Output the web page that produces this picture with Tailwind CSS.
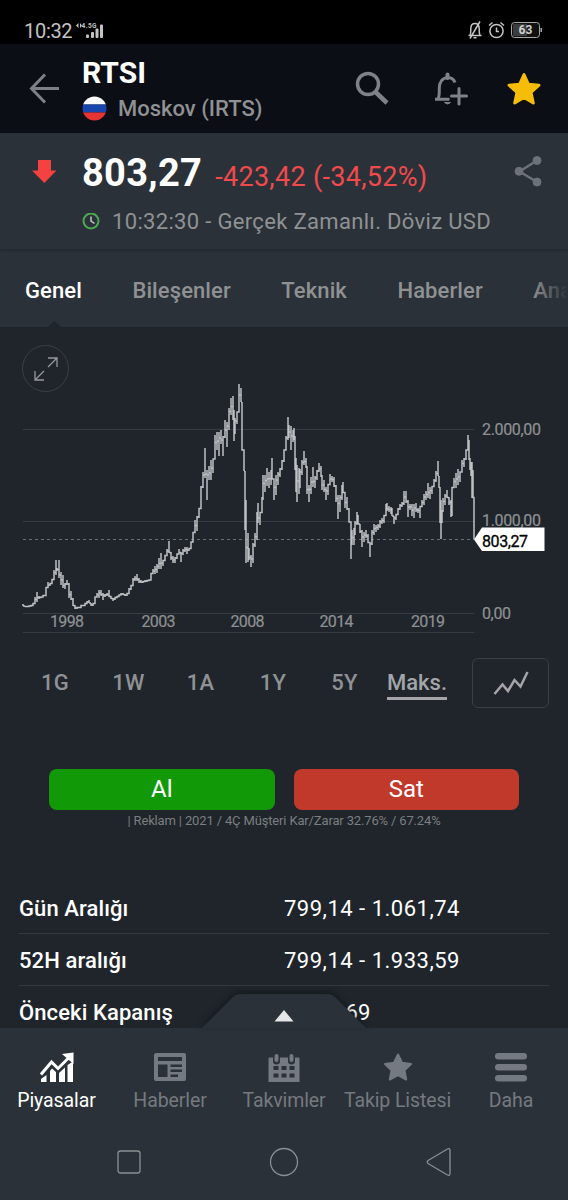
<!DOCTYPE html>
<html lang="tr">
<head>
  <meta charset="UTF-8">
  <meta name="viewport" content="width=device-width, initial-scale=1.0">
  <title>RTSI - Moskov (IRTS)</title>
  <script src="https://cdn.jsdelivr.net/npm/@tailwindcss/browser@4"></script>
</head>
<body class="bg-[#1f252b]">
  <div class="relative flex h-[1200px] w-[568px] flex-col overflow-hidden bg-[#1f252b] font-['Roboto',sans-serif] text-[#8f9193]">

    <!-- Status bar -->
    <div class="flex h-11 shrink-0 items-end justify-between bg-black pr-[25px] pb-[4px] pl-6 text-[#c4c4c4]">
      <div class="flex items-end">
        <span class="text-[20px] leading-[18px] tracking-[-0.3px]">10:32</span>
        <svg class="ml-1 h-[18px] w-[30px]" viewBox="0 0 30 18" fill="#c4c4c4">
          <path d="M2.500 1v5L0 3.500zM4 1v5l2-2.500z" />
          <text x="5.500" y="5.500" font-size="6.500" font-weight="700" textLength="15">4.5G</text>
          <rect x="10" y="12.500" width="3" height="3.500" rx="1" />
          <rect x="15" y="10" width="3" height="6" rx="1" />
          <rect x="19.500" y="6.500" width="3" height="9.500" rx="1" />
          <rect x="24" y="2.500" width="3" height="13.500" rx="1" />
        </svg>
      </div>
      <div class="flex items-center gap-[5px]">
        <svg class="h-5 w-4" viewBox="0 0 16 20" fill="none" stroke="#c4c4c4" stroke-width="1.500">
          <path d="M1.500 15.500h13M3 15.500c.8-1.500.8-4 .8-7C3.800 5 5.800 3.500 8 3.500s4.200 1.500 4.200 5c0 3 0 5.500.8 7M6.500 17.800h3M13 1.500L3 18.500" />
        </svg>
        <svg class="h-5 w-[17px]" viewBox="0 0 17 20" fill="none" stroke="#c4c4c4" stroke-width="1.500">
          <circle cx="8.500" cy="11" r="6.600" />
          <path d="M8.500 7.500V11.500H11M1 5.500L4.500 2.500M16 5.500L12.500 2.500" />
        </svg>
        <svg class="h-5 w-[33px]" viewBox="0 0 33 20">
          <rect x="1.500" y="2.500" width="28" height="15" rx="3" fill="#111" stroke="#a8a8a8" />
          <path d="M4 4h13v12H4q-1 0-1-1V5q0-1 1-1z" fill="#3c3c3c" />
          <rect x="30.500" y="8" width="1.500" height="4" fill="#a8a8a8" />
          <text x="15.500" y="14.200" text-anchor="middle" font-size="12" font-weight="700" fill="#d0d0d0">63</text>
        </svg>
      </div>
    </div>

    <!-- App header -->
    <header class="flex h-[89px] shrink-0 items-center bg-[#0b0e15]">
      <svg class="ml-[29px] h-8 w-8" viewBox="0 0 32 32" fill="none" stroke="#7d8087" stroke-width="3">
        <path d="M30 15.500H3M16 1.500L2.500 15.500L16 29.500" />
      </svg>
      <div class="ml-[21px] w-[260px]">
        <h1 class="pt-[3px] text-[30px] leading-[32px] font-bold text-white">RTSI</h1>
        <div class="mt-[4px] flex h-[30px] items-center">
          <svg class="h-[25px] w-[25px]" viewBox="0 0 25 25">
            <clipPath id="flag"><circle cx="12.500" cy="12.500" r="12" /></clipPath>
            <g clip-path="url(#flag)">
              <rect width="25" height="8.500" fill="#fafafa" />
              <rect y="8.500" width="25" height="8" fill="#1846ae" />
              <rect y="16.500" width="25" height="8.500" fill="#e63434" />
            </g>
          </svg>
          <span class="ml-[11px] pt-[2px] text-[22px] leading-[26px] font-medium">Moskov (IRTS)</span>
        </div>
      </div>
      <svg class="ml-[12px] h-9 w-9" viewBox="0 0 36 36" fill="none" stroke="#7f8289">
        <circle cx="14" cy="13" r="10.500" stroke-width="3.500" />
        <path d="M21.500 21L33 32" stroke-width="4.500" />
      </svg>
      <svg class="ml-[42px] h-9 w-9" viewBox="0 0 36 36" fill="none" stroke="#7f8289" stroke-width="3">
        <path d="M3 28.300H17.500M5.800 28C7.500 26 7.300 22.500 7.300 17.500C7.300 11 10.500 7 15.500 6.500C19.500 6.500 22 8.500 23 11.500" />
        <path d="M15.500 3.500V7" stroke-width="4" stroke-linecap="round" />
        <path d="M12.500 31.500Q15.500 34.500 18.500 31.500z" fill="#7f8289" stroke-width="1" />
        <path d="M27 17.500V33M19.500 25H34.500" stroke-linecap="round" />
      </svg>
      <svg class="ml-[38px] h-9 w-9" viewBox="0 0 36 36" fill="#f6bd08" stroke="#f6bd08" stroke-width="3" stroke-linejoin="round">
        <path d="M18 3.500L22.300 13.200L33 14.200L25 21.300L27.300 32L18 26.400L8.700 32L11 21.300L3 14.200L13.700 13.200z" />
      </svg>
    </header>

    <!-- Quote -->
    <section class="relative z-10 flex h-[116px] shrink-0 bg-[#2b3138] shadow-[0_1px_3px_rgba(0,0,0,0.25)]">
      <svg class="mt-[27px] ml-8 h-6 w-[25px]" viewBox="0 0 25 24" fill="#f44141">
        <path d="M6 0H19V10.500H24.500L12.300 23L0 10.500H6z" />
      </svg>
      <div class="ml-[25px] flex flex-col">
        <div class="flex h-[76px] items-baseline pt-[18px] whitespace-nowrap">
          <span class="text-[38px] leading-[44px] font-bold tracking-[0.3px] text-white">803,27</span>
          <span class="ml-[13px] text-[27px] leading-[44px] tracking-[0.3px] text-[#f04a4c]">-423,42 (-34,52%)</span>
        </div>
        <div class="flex items-center whitespace-nowrap">
          <svg class="h-[18px] w-[18px]" viewBox="0 0 18 18" fill="none">
            <circle cx="9" cy="8" r="7.500" stroke="#4da851" stroke-width="2" />
            <path d="M9 3.500V8L12.500 10.500" stroke="#c4c8c4" stroke-width="1.500" />
          </svg>
          <span class="ml-[12px] text-[22px] leading-[26px] tracking-[0.33px]">10:32:30 - Gerçek Zamanlı. Döviz USD</span>
        </div>
      </div>
      <svg class="absolute top-[22px] right-[26px] h-8 w-7" viewBox="0 0 28 32" fill="#6d7178" stroke="#6d7178">
        <path d="M23 5.500L5.500 16.500L23 27" stroke-width="2.500" fill="none" />
        <circle cx="23" cy="5.500" r="4" /><circle cx="5" cy="16.300" r="4" /><circle cx="23" cy="27" r="4" />
      </svg>
    </section>

    <!-- Tabs -->
    <nav class="relative flex h-[78px] shrink-0 items-center gap-[50.5px] overflow-hidden bg-[#2b3138] pt-[6px] pl-[25px] text-[22px] leading-[26px] font-medium tracking-[0.1px] whitespace-nowrap">
      <span class="text-white">Genel</span>
      <span>Bileşenler</span>
      <span>Teknik</span>
      <span>Haberler</span>
      <span>Analiz</span>
      <div class="absolute top-0 right-0 h-full w-9 bg-linear-to-r from-[#2b3138]/0 to-[#2b3138]"></div>
      <svg class="absolute bottom-0 left-12 h-[6px] w-[13px]" viewBox="0 0 13 6"><path d="M0 6L6.500 0L13 6z" fill="#1f252b" /></svg>
    </nav>

    <!-- Price chart -->
    <section class="relative h-[313px] shrink-0">
      <svg class="h-[313px] w-[568px]" viewBox="0 327 568 313" fill="none">
        <path d="M23 429.500H474M23 521.500H474M23 613.500H474M23 632.500H474" stroke="#373c42" />
        <path d="M23 539.500H474" stroke="#6a6f74" stroke-dasharray="3 3" />
        <path id="series" stroke="#bfc1c3" stroke-width="1.500" />
        <g font-size="16" fill="#8f9193" stroke="#8f9193" stroke-width=".2">
          <text x="50" y="627" textLength="34">1998</text>
          <text x="141.500" y="627" textLength="34">2003</text>
          <text x="230.500" y="627" textLength="34">2008</text>
          <text x="319.500" y="627" textLength="34">2014</text>
          <text x="411" y="627" textLength="34">2019</text>
          <text x="482" y="434.500" textLength="59">2.000,00</text>
          <text x="482" y="526" textLength="59">1.000,00</text>
          <text x="482" y="618.500" textLength="29">0,00</text>
        </g>
        <path d="M474 539.500L482 527.500H544.500V551H482z" fill="#fff" />
        <text x="482" y="546.500" font-size="16" fill="#000" stroke="#000" stroke-width=".3" textLength="46">803,27</text>
      </svg>
      <div class="absolute top-[18px] left-[22px] flex h-[47px] w-[47px] items-center justify-center rounded-full border border-[#3d3f47] bg-[#20242b]">
        <svg class="h-6 w-6" viewBox="0 0 24 24" fill="none" stroke="#96989b" stroke-width="1.300">
          <path d="M14 1H23V10M23 1L14 10M1 14V23H10M1 23L10 14" />
        </svg>
      </div>
    </section>

    <!-- Time ranges -->
    <section class="flex h-[86px] shrink-0 items-center text-[22px] leading-[26px] font-medium tracking-[0.3px]">
      <div class="grid w-[387px] shrink-0 grid-cols-[110px_37px_107px_38px_95px] pb-px text-center whitespace-nowrap">
        <span>1G</span>
        <span class="-mx-2">1W</span>
        <span>1A</span>
        <span class="-mx-2">1Y</span>
        <span class="pl-[10px]">5Y</span>
      </div>
      <span class="mt-[1px] mr-[25px] h-[33px] w-[60px] shrink-0 border-b-[3px] border-[#a3a5a8] pt-[3px] tracking-normal text-[#a3a5a8]">Maks.</span>
      <div class="flex h-[50px] w-[77px] shrink-0 items-center justify-center rounded-md border border-[#3a3f46]">
        <svg class="h-6 w-9" viewBox="0 0 36 24" fill="none" stroke="#a3a5a8" stroke-width="2.500">
          <path d="M1.500 23L9.500 13.500L15 20L21.500 9L27.500 15.500L34.500 1" />
        </svg>
      </div>
    </section>

    <!-- Trade buttons -->
    <section class="mt-[43px] shrink-0 px-[49px]">
      <div class="grid grid-cols-2 gap-[19px] text-center text-[24px] leading-[40px] text-white">
        <div class="h-[41px] rounded-lg bg-[#129908]">Al</div>
        <div class="h-[41px] rounded-lg bg-[#c1392b]">Sat</div>
      </div>
      <p class="mt-[3px] text-center text-[13px] leading-4 tracking-[-0.15px] whitespace-nowrap text-[#7c7e80]">| Reklam | 2021 / 4Ç Müşteri Kar/Zarar 32.76% / 67.24%</p>
    </section>

    <!-- Summary -->
    <dl class="mx-[19px] mt-[53px] shrink-0 text-[22px] leading-[26px] tracking-[0.5px] text-white">
      <div class="flex h-[52px] items-center border-b border-[#343940] pt-[2px]">
        <dt class="w-[265px] font-medium tracking-[0.1px]">Gün Aralığı</dt><dd>799,14 - 1.061,74</dd>
      </div>
      <div class="flex h-[52px] items-center border-b border-[#343940] pt-[2px]">
        <dt class="w-[265px] font-medium tracking-[0.1px]">52H aralığı</dt><dd>799,14 - 1.933,59</dd>
      </div>
      <div class="flex h-[52px] items-center pt-[2px]">
        <dt class="w-[265px] font-medium tracking-[0.1px]">Önceki Kapanış</dt><dd class="tracking-[0.3px]">1.226,69</dd>
      </div>
    </dl>

    <!-- Bottom bar -->
    <footer class="absolute inset-x-0 bottom-0 h-[207px]">
      <svg class="h-[35px] w-[568px] drop-shadow-[0_-2px_3px_rgba(0,0,0,0.35)]" viewBox="0 0 568 35">
        <path d="M0 35H202L233 4Q236 1 241 1H327Q332 1 335 4L366 35H568V36H0z" fill="#2b3138" />
        <path d="M284 17L293.500 28.500H274.500z" fill="#e4e6e8" />
      </svg>
      <div class="h-[172px] bg-[#2b3138]">
        <div class="grid h-[86px] grid-cols-[113px_114px_114px_113px_114px] pt-6 text-center text-[19.5px] leading-6 tracking-[-0.1px] whitespace-nowrap text-[#757980]">
          <div class="flex flex-col items-center gap-[7px] text-white">
            <svg class="h-[30px] w-[34px]" viewBox="0 0 34 30">
              <path d="M1 22.500L11.500 10L18 16.500L29 5.500" fill="none" stroke="#fff" stroke-width="3" />
              <path d="M22 2L33.500 .5V12z" fill="#fff" />
              <path d="M1 27L6.500 23V30H1zM10 19L12 16.500L16 20V30H10zM19 21L25 15.500V30H19zM27.500 13L33 9.500V30H27.500z" fill="#fff" />
            </svg>
            <span>Piyasalar</span>
          </div>
          <div class="flex flex-col items-center gap-[7px]">
            <svg class="h-[30px] w-8" viewBox="0 0 32 30">
              <path fill="#757980" fill-rule="evenodd" d="M2 1H30Q32 1 32 3V27Q32 29 30 29H2Q0 29 0 27V3Q0 1 2 1zM4 5V9H28V5zM4 12.500V25H13.500V12.500zM16.500 12.500V15H28V12.500zM16.500 17.500V20H28V17.500zM16.500 22.500V25H24V22.500z" />
            </svg>
            <span>Haberler</span>
          </div>
          <div class="flex flex-col items-center gap-[7px]">
            <svg class="h-[30px] w-8" viewBox="0 0 32 30">
              <rect x=".5" y="5.500" width="31" height="25" rx="1" fill="#757980" />
              <path d="M8.500 4V9M23.500 4V9" stroke="#2b3138" stroke-width="7" stroke-linecap="round" />
              <path d="M8.500 4V8M23.500 4V8" stroke="#757980" stroke-width="4" stroke-linecap="round" />
              <path d="M5.500 14h5v4h-5zM13.500 14h5v4h-5zM21.500 14h5v4h-5zM5.500 21.500h5v4h-5zM13.500 21.500h5v4h-5zM21.500 21.500h5v4h-5z" fill="#2b3138" />
            </svg>
            <span>Takvimler</span>
          </div>
          <div class="flex flex-col items-center gap-[7px]">
            <svg class="h-[30px] w-[30px]" viewBox="0 0 30 30" fill="#757980" stroke="#757980" stroke-width="2" stroke-linejoin="round">
              <path d="M15 2.500L19 10.800L28 12L21.500 18.300L23.200 27.500L15 23.200L6.800 27.500L8.500 18.300L2 12L11 10.800z" />
            </svg>
            <span>Takip Listesi</span>
          </div>
          <div class="flex flex-col items-center gap-[7px]">
            <svg class="h-[30px] w-8" viewBox="0 0 32 30" fill="#757980">
              <rect y="1" width="32" height="6.500" rx="3.200" />
              <rect y="12" width="32" height="6.500" rx="3.200" />
              <rect y="23" width="32" height="6.500" rx="3.200" />
            </svg>
            <span>Daha</span>
          </div>
        </div>
        <div class="flex items-center pt-[33px]">
          <svg class="ml-[117px] h-[30px] w-6" viewBox="0 0 24 30" fill="none" stroke="#8b8f93" stroke-width="1.300"><rect x="1" y="4" width="22" height="22" rx="2.500" /></svg>
          <svg class="ml-[128px] h-[30px] w-[30px]" viewBox="0 0 30 30" fill="none" stroke="#8b8f93" stroke-width="1.300"><circle cx="15" cy="15" r="13.500" /></svg>
          <svg class="ml-[127px] h-[30px] w-[26px]" viewBox="0 0 26 30" fill="none" stroke="#8b8f93" stroke-width="1.300" stroke-linejoin="round"><path d="M2 13.500L21.500 2Q24 1 24 3.500V26.500Q24 29 21.500 28L2 16.500Q.5 15 2 13.500z" /></svg>
        </div>
      </div>
    </footer>
  </div>

  <script>
    // x, high, low of each bar
    const bars = `23 604 606,25 606 607,27 606 607,29 606 607,31 605 606,33 603 606,35 597 604,37 592 602,39 596 599,41 597 598,43 596 597,46 588 595,48 582 587,50 584 586,52 579 583,54 570 580,56 560 575,57 568 571,59 560 578,61 572 585,63 575 588,65 583 589,67 580 585,69 583 598,71 591 600,73 598 606,75 605 609,77 607 609,79 607 608,81 605 608,83 605 606,85 603 606,87 601 604,89 600 603,91 603 606,93 604 606,95 597 603,97 593 597,99 590 598,101 590 596,103 593 600,105 594 597,107 593 596,109 590 596,111 597 599,113 598 601,115 597 600,117 596 598,119 595 597,121 593 595,123 593 595,125 594 596,127 594 596,129 588 593,131 585 590,133 578 586,135 576 581,137 574 581,139 578 583,141 580 583,143 581 583,145 580 582,147 580 582,149 580 581,151 574 580,153 569 573,155 566 574,157 564 573,159 558 569,161 553 569,163 560 566,165 555 561,167 549 556,169 541 553,171 552 560,173 556 563,175 557 563,177 555 559,179 549 553,181 552 562,183 549 555,185 547 552,187 547 554,189 549 551,191 543 548,193 533 541,195 520 532,197 516 531,199 508 518,201 486 509,203 472 488,205 448 478,207 470 500,209 466 480,211 460 480,213 463 473,215 435 455,217 432 450,219 432 456,221 430 444,223 436 456,225 420 438,227 422 447,229 408 430,231 398 415,233 396 420,234 410 441,235 418 434,237 412 424,239 384 412,241 388 402,242 402 440,244 460 471,245 471 530,246 500 563,248 533 562,249 548 560,251 555 567,253 543 563,255 533 547,257 512 540,258 503 523,260 513 525,262 497 512,263 475 500,265 475 492,267 468 486,269 472 488,271 470 485,272 458 478,274 480 500,276 475 495,278 472 485,280 468 477,282 460 470,284 450 462,286 436 450,288 417 440,289 425 438,291 426 450,293 430 442,294 428 440,295 436 470,296 458 492,297 465 502,299 468 494,300 469 488,302 460 475,304 451 465,306 458 468,307 466 494,309 485 502,311 477 494,313 467 487,315 476 488,317 470 480,319 463 472,321 466 477,322 475 490,324 480 492,326 487 500,328 484 495,330 474 485,332 476 482,334 477 487,336 485 502,338 495 519,340 495 512,342 485 500,343 482 490,345 495 508,347 497 510,349 508 520,351 524 559,352 530 545,354 528 545,355 521 535,357 512 525,358 515 524,360 524 533,362 530 547,364 532 542,366 530 538,368 534 542,370 543 557,372 530 545,374 524 535,376 525 532,378 524 530,380 520 528,382 518 524,384 516 523,386 504 515,387 503 511,389 506 512,391 507 514,392 508 516,394 516 524,396 515 520,398 508 514,400 504 510,402 502 507,404 491 505,406 491 503,408 500 517,410 504 510,412 504 516,414 504 518,416 503 512,418 508 513,420 507 518,422 500 506,424 494 505,426 491 500,428 483 498,430 487 499,432 486 494,434 479 487,436 471 482,438 461 476,439 476 488,440 487 523,441 500 539,442 510 523,443 498 512,445 494 505,447 490 498,449 497 505,451 500 517,452 490 516,454 478 485,456 473 488,458 469 485,460 472 482,462 460 472,464 458 467,466 450 460,468 435 450,469 440 460,470 458 470,471 462 476,472 462 498,473 470 497,474 498 539`
      .split(',').map(bar => bar.split(' ').map(Number));

    // neighbouring bars are joined halfway through their overlap
    document.getElementById('series').setAttribute('d', bars.map(([x, high, low], i) => {
      const next = bars[i + 1];
      const bar = `M${x} ${high}V${low}`;
      if (!next) return bar;
      const join = (Math.max(high, next[1]) + Math.min(low, next[2])) / 2;
      return `${bar}M${x} ${low}V${join}H${next[0]}V${next[1]}`;
    }).join(''));
  </script>
</body>
</html>
